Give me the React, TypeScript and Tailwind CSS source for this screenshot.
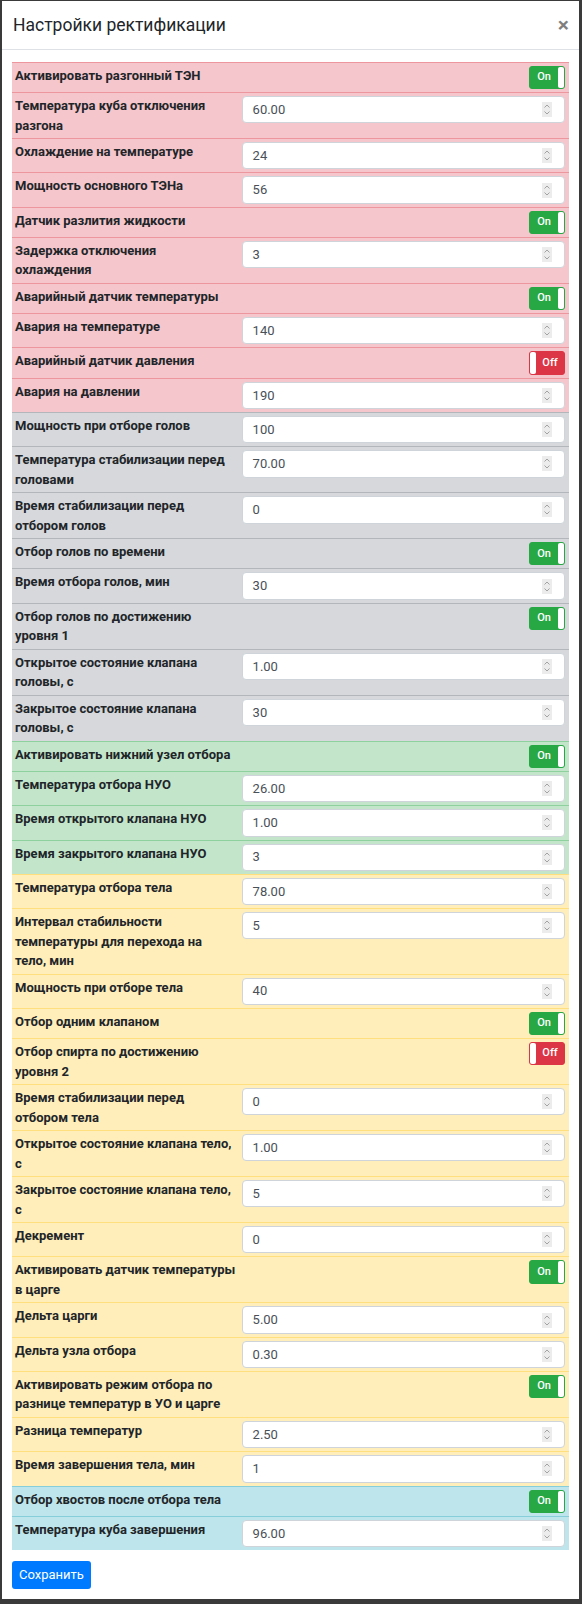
import React from "react";

type Row =
  | { label: string; value: string }
  | { label: string; toggle: boolean };

interface Group {
  rowClass: string;
  rows: Row[];
}

const groups: Group[] = [
  {
    rowClass: "bg-[#f5c6cb] border-[#ed969e]",
    rows: [
      { label: "Активировать разгонный ТЭН", toggle: true },
      { label: "Температура куба отключения разгона", value: "60.00" },
      { label: "Охлаждение на температуре", value: "24" },
      { label: "Мощность основного ТЭНа", value: "56" },
      { label: "Датчик разлития жидкости", toggle: true },
      { label: "Задержка отключения охлаждения", value: "3" },
      { label: "Аварийный датчик температуры", toggle: true },
      { label: "Авария на температуре", value: "140" },
      { label: "Аварийный датчик давления", toggle: false },
      { label: "Авария на давлении", value: "190" },
    ],
  },
  {
    rowClass: "bg-[#d6d8db] border-[#b3b7bb]",
    rows: [
      { label: "Мощность при отборе голов", value: "100" },
      { label: "Температура стабилизации перед головами", value: "70.00" },
      { label: "Время стабилизации перед отбором голов", value: "0" },
      { label: "Отбор голов по времени", toggle: true },
      { label: "Время отбора голов, мин", value: "30" },
      { label: "Отбор голов по достижению уровня 1", toggle: true },
      { label: "Открытое состояние клапана головы, с", value: "1.00" },
      { label: "Закрытое состояние клапана головы, с", value: "30" },
    ],
  },
  {
    rowClass: "bg-[#c3e6cb] border-[#8fd19e]",
    rows: [
      { label: "Активировать нижний узел отбора", toggle: true },
      { label: "Температура отбора НУО", value: "26.00" },
      { label: "Время открытого клапана НУО", value: "1.00" },
      { label: "Время закрытого клапана НУО", value: "3" },
    ],
  },
  {
    rowClass: "bg-[#ffeeba] border-[#ffdf7e]",
    rows: [
      { label: "Температура отбора тела", value: "78.00" },
      { label: "Интервал стабильности температуры для перехода на тело, мин", value: "5" },
      { label: "Мощность при отборе тела", value: "40" },
      { label: "Отбор одним клапаном", toggle: true },
      { label: "Отбор спирта по достижению уровня 2", toggle: false },
      { label: "Время стабилизации перед отбором тела", value: "0" },
      { label: "Открытое состояние клапана тело, с", value: "1.00" },
      { label: "Закрытое состояние клапана тело, с", value: "5" },
      { label: "Декремент", value: "0" },
      { label: "Активировать датчик температуры\nв царге", toggle: true },
      { label: "Дельта царги", value: "5.00" },
      { label: "Дельта узла отбора", value: "0.30" },
      { label: "Активировать режим отбора по разнице температур в УО и царге", toggle: true },
      { label: "Разница температур", value: "2.50" },
      { label: "Время завершения тела, мин", value: "1" },
    ],
  },
  {
    rowClass: "bg-[#bee5eb] border-[#86cfda]",
    rows: [
      { label: "Отбор хвостов после отбора тела", toggle: true },
      { label: "Температура куба завершения", value: "96.00" },
    ],
  },
];

const Toggle = ({ on }: { on: boolean }) =>
  on ? (
    <div className="ml-auto flex h-[23.2px] w-[36px] items-stretch rounded-[3px] border border-[#28a745] bg-[#28a745]">
      <span className="flex flex-1 items-center justify-center text-[11px] font-medium text-white">On</span>
      <span className="w-[6px] rounded-[2px] bg-white" />
    </div>
  ) : (
    <div className="ml-auto flex h-[23.2px] w-[36px] items-stretch rounded-[3px] border border-[#dc3545] bg-[#dc3545]">
      <span className="w-[6px] rounded-[2px] bg-white" />
      <span className="flex flex-1 items-center justify-center text-[11px] font-medium text-white">Off</span>
    </div>
  );

const NumberInput = ({ value }: { value: string }) => (
  <div className="flex h-[27.3px] items-center rounded-[4px] border border-[#ced4da] bg-white pl-[10px] pr-[12px] text-[13px] text-[#495057]">
    <span className="flex-1">{value}</span>
    <svg width="10" height="15" viewBox="0 0 10 15" className="bg-[#ececec]">
      <path d="M2.5 5.5 L5 3 L7.5 5.5" fill="none" stroke="#9a9a9a" strokeWidth="0.9" />
      <path d="M2.5 9.5 L5 12 L7.5 9.5" fill="none" stroke="#9a9a9a" strokeWidth="0.9" />
    </svg>
  </div>
);

export default function App() {
  return (
    <div
      className="min-h-screen bg-[#3a3a3a] pb-[3px] pl-[2px] pr-[3px] pt-px"
      style={{ fontFamily: 'Roboto, "Liberation Sans", Arial, sans-serif' }}
    >
      <div className="bg-white text-[#212529]">
        <div className="flex h-[49px] items-center justify-between border-b border-[#dee2e6] pl-[11px] pr-[10px]">
          <h5 className="text-[17.5px] leading-[27px]">Настройки ректификации</h5>
          <button className="text-[21px] font-bold leading-none text-black/50">×</button>
        </div>

        <div className="px-[10px] pt-[12px]">
          <table className="w-full table-fixed border-collapse">
            <tbody>
              {groups.map((group, gi) =>
                group.rows.map((row, ri) => (
                  <tr key={`${gi}-${ri}`} className={`border-t ${group.rowClass}`}>
                    <td className="w-[40.5%] px-[3px] py-[3px] align-top">
                      <label
                        className={
                          row.label.includes("\n")
                            ? "block whitespace-pre text-[13px] font-bold leading-[19.5px]"
                            : "block text-[13px] font-bold leading-[19.5px]"
                        }
                      >
                        {row.label}
                      </label>
                    </td>
                    <td className="px-[4px] py-[3px] align-top">
                      {"toggle" in row ? <Toggle on={row.toggle} /> : <NumberInput value={row.value} />}
                    </td>
                  </tr>
                ))
              )}
            </tbody>
          </table>
        </div>

        <div className="px-[10px] pb-[10px] pt-[11px]">
          <button className="h-[28px] rounded-[3px] bg-[#007bff] px-[7px] text-[13px] text-white">
            Сохранить
          </button>
        </div>
      </div>
    </div>
  );
}
